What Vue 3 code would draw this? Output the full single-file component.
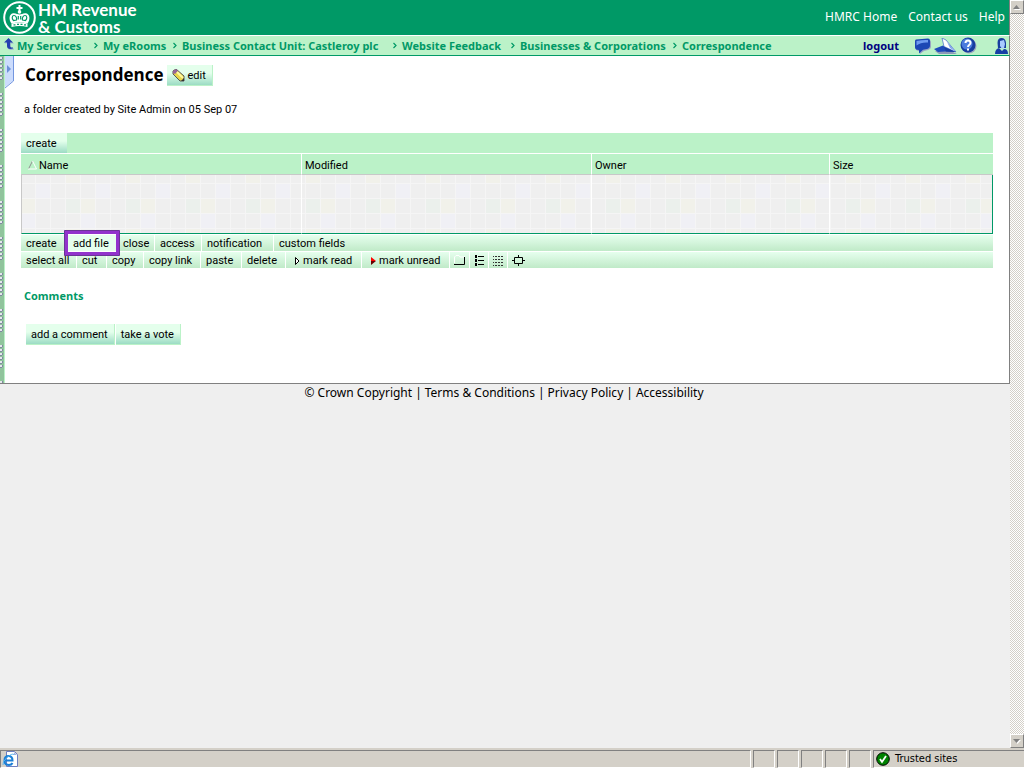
<script setup>
const crumbs = ['My Services', 'My eRooms', 'Business Contact Unit: Castleroy plc', 'Website Feedback', 'Businesses & Corporations', 'Correspondence']
const fileActions = ['create', 'add file', 'close', 'access', 'notification', 'custom fields']
const editActions = ['select all', 'cut', 'copy', 'copy link', 'paste', 'delete']
const footer = ['© Crown Copyright', 'Terms & Conditions', 'Privacy Policy', 'Accessibility']
const panes = 5
</script>

<template>
  <div class="window">
    <div class="viewport">
      <div class="page">
        <header class="banner">
          <a class="brand" href="#" aria-label="HM Revenue and Customs">
            <svg class="crest" width="34" height="34" viewBox="0 0 34 34" aria-hidden="true">
              <circle cx="17.500" cy="17.500" r="15.300" fill="none" stroke="#fff" stroke-width="2" />
              <path d="M16.500 5h2v2h2v2h-2v2h-2V9h-2V7h2z" fill="#fff" />
              <circle cx="17.500" cy="12" r="1.800" fill="#fff" />
              <path d="M9.500 23.500C6.500 20 7 14 11 13.300c3-.4 4.500 1.200 6.500 1.200s3.500-1.600 6.500-1.200c4 .7 4.500 6.700 1.500 10.200-5-1.500-11-1.500-16 0z" fill="#fff" />
              <path d="M11.500 20.500c-2-2-1.500-5 .5-5s3 2.500 2.500 4.500zM16.300 19.500v-3.500M18.700 19.500v-3.500M23.500 20.500c2-2 1.500-5-.5-5s-3 2.500-2.500 4.500z" fill="none" stroke="#096" stroke-width="1.200" />
              <path d="M9.500 23.500c5-1.500 11-1.500 16 0V27c-5-1.300-11-1.300-16 0z" fill="#fff" />
              <path d="M11.500 24.800h2M15 24.300h2M18.500 24.300h2M22 24.800h2" stroke="#096" stroke-width="1.300" />
            </svg>
            <span class="wordmark"><span>HM Revenue</span><span>&amp; Customs</span></span>
          </a>
          <nav class="top-links">
            <a href="#">HMRC Home</a><a href="#">Contact us</a><a href="#">Help</a>
          </nav>
        </header>

        <div class="trail">
          <a class="up" href="#" aria-label="Up">
            <svg width="10" height="12" viewBox="0 0 10 12"><path d="M5.500 1L10 5.500H7V9c0 1 1 1.500 3 1.500v1C6 12.500 4 11.500 4 9V5.500H1z" fill="#9db8c8" /><path d="M4.500 0L9 4.500H6V8c0 1 1 1.500 3 1.500v1C5 11.500 3 10.500 3 8V4.500H0z" fill="#2440b0" /></svg>
          </a>
          <nav class="crumbs">
            <span v-for="(c, i) in crumbs" :key="c" class="crumb"><a href="#">{{ c }}</a><svg v-if="i < crumbs.length - 1" width="4" height="7" viewBox="0 0 4 7"><path d="M.5 1L3 3.500.5 6" fill="none" stroke="#009966" stroke-width="1.200" /></svg></span>
          </nav>
          <a class="logout" href="#">logout</a>
          <div class="tools">
            <button aria-label="Chat"><svg width="17" height="16" viewBox="0 0 17 16"><path d="M3 3l12-1q2 0 2 2v5q0 2-3 3l-4 1-4 3V13Q2 13 2 11V5q0-2 1-2z" fill="#9aa4c4" /><path d="M2 1.500L14 .5q2 0 2 2v5Q16 10 13 11l-4 .8L5 15.500V12Q1 12 1 9.500V3.500q0-2 1-2z" fill="#1c47b4" /><path d="M2.500 3Q9 1.500 14 2v2.500Q7 4 2.500 7.500z" fill="#6e9bef" /></svg></button>
            <button aria-label="Send"><svg width="23" height="16" viewBox="0 0 23 16"><path d="M1 13l10-3 12 6H5z" fill="#8c98b9" /><path d="M0 11L9 7.500l13 6.500-11-.5-7 .5z" fill="#1e4cba" /><path d="M8 0l4 2 10 12L10 8.500z" fill="#fff" stroke="#4168c8" stroke-width=".7" /><path d="M13 4l9 10-6-4z" fill="#7fa4ee" /><path d="M10 9l12 5-10-.5z" fill="#1840a0" /></svg></button>
            <button aria-label="Help"><svg width="17" height="17" viewBox="0 0 17 17"><circle cx="9" cy="9" r="7.500" fill="#9ca7bd" /><circle cx="8" cy="8" r="7.500" fill="#173e9f" /><circle cx="7" cy="7" r="5.500" fill="#4c7cdd" /><path d="M5.500 6q0-2.500 2.500-2.500T10.500 6C10.500 8 8 7.500 8 10M8 11.500v2" fill="none" stroke="#fff" stroke-width="2" /></svg></button>
            <button class="person" aria-label="Members"><svg width="13" height="16" viewBox="0 0 13 16"><path d="M2.500 5Q2.500 0 6.500 0t4.500 5l0 5H3z" fill="#173e9f" /><path d="M5 3l4-1 1 4-1 4-2 1-2-3z" fill="#a9ccff" /><path d="M0 16q0-5 4-6l3 3 2-2q4 0 4 5z" fill="#173ea5" /></svg></button>
          </div>
        </div>

        <div class="room">
          <div class="rail"></div>
          <button class="drawer" aria-label="Open panel"><svg width="9" height="33" viewBox="0 0 9 33"><path d="M0 0H8V25L0 31z" fill="#ccdcfc" /><path d="M8.500 0V25L0 32" fill="none" stroke="#7396df" /><path d="M2 9l4 4-4 4z" fill="#6d91d8" /></svg></button>
          <main class="content">
            <div class="title-row">
              <h1>Correspondence</h1>
              <button class="action edit"><svg width="13" height="13" viewBox="0 0 13 13"><path d="M1 2l3-2 8 7v5H8L1 5z" fill="#e8d64a" stroke="#555" /><path d="M1 2l3-2 2 2-3 3-2-1z" fill="#96649a" /><path d="M5 3l6 6" stroke="#fff9a0" stroke-width="2" /><path d="M9 12l3-3v3z" fill="#333" /></svg>edit</button>
            </div>
            <p class="meta">a folder created by Site Admin on 05 Sep 07</p>

            <section class="listing">
              <div class="create-bar"><button>create</button></div>
              <table>
                <colgroup><col class="c-name"><col class="c-modified"><col class="c-owner"><col></colgroup>
                <thead>
                  <tr>
                    <th><svg class="sort" width="9" height="9" viewBox="0 0 9 9"><path d="M.5 8L4.500 0" stroke="#909090" /><path d="M4.500 0l4 8H0" fill="none" stroke="#fff" /></svg>Name</th>
                    <th>Modified</th><th>Owner</th><th>Size</th>
                  </tr>
                </thead>
                <tbody><tr><td></td><td></td><td></td><td></td></tr></tbody>
              </table>
              <div class="bar bar-file">
                <button v-for="a in fileActions" :key="a" :class="{ marked: a === 'add file' }">{{ a }}</button>
              </div>
              <div class="bar bar-edit">
                <button v-for="a in editActions" :key="a">{{ a }}</button>
                <button class="mark"><svg width="5" height="8" viewBox="0 0 5 8"><path d="M.5.5v7L4 4z" fill="#fff" stroke="#000" /></svg>mark read</button>
                <button class="mark"><svg width="5" height="8" viewBox="0 0 5 8"><path d="M0 0v4h5z" fill="#f00" /><path d="M0 8V4h5z" fill="#600" /></svg>mark unread</button>
                <button class="icon" aria-label="Large icons"><svg width="12" height="10" viewBox="0 0 12 10"><path d="M.5 8V2L2 .5h3L6 2h5" fill="none" stroke="#fff" /><path d="M0 9.500h10.500V2" fill="none" stroke="#000" /></svg></button>
                <button class="icon" aria-label="List"><svg width="10" height="11" viewBox="0 0 10 11"><path d="M1 0h2v3H1zM1 4h2v3H1zM1 8h2v3H1zM4 1h6v1H4zM4 5h6v1H4zM4 9h6v1H4z" /></svg></button>
                <button class="icon" aria-label="Details"><svg width="11" height="11" viewBox="0 0 11 11"><path d="M0 1.500h11M0 4.500h11M0 7.500h11M0 10.500h11" stroke="#333" stroke-dasharray="1 1 2 1 2 1 2 1" /></svg></button>
                <button class="icon" aria-label="Fit"><svg width="13" height="11" viewBox="0 0 13 11"><path d="M2.500 2.500h8v6h-8zM6.500 0v2M6.500 9v2M0 5.500h2M11 5.500h2" fill="none" stroke="#000" /></svg></button>
              </div>
            </section>

            <h2>Comments</h2>
            <div class="comment-actions">
              <button class="action">add a comment</button><button class="action">take a vote</button>
            </div>
          </main>
        </div>

        <footer class="legal">
          <template v-for="(f, i) in footer" :key="f"><span v-if="i">|</span><a href="#">{{ f }}</a></template>
        </footer>
      </div>

      <div class="scrollbar">
        <button aria-label="Scroll up"><svg width="8" height="5" viewBox="0 0 8 5"><path d="M1 5h7L4.500 1z" fill="#fff" /><path d="M0 4h7L3.500 0z" fill="#808080" /></svg></button>
        <button aria-label="Scroll down"><svg width="8" height="5" viewBox="0 0 8 5"><path d="M1 1h7L4.500 5z" fill="#fff" /><path d="M0 0h7L3.500 4z" fill="#808080" /></svg></button>
      </div>
    </div>

    <div class="status">
      <div class="pane pane-main">
        <svg width="16" height="16" viewBox="0 0 16 16"><path d="M4.500.5h8l3 3v12h-11z" fill="#fff" stroke="#6f7fc0" /><path d="M12 1v3h3" fill="#9fb0e0" /><path d="M3 9.500h7.500q0-4.500-4-4.500T2.500 9.500 7 14q2.500 0 3.500-2" fill="none" stroke="#1b7fd6" stroke-width="2" /><path d="M1 14Q0 11 5 6.500T12 3.500" fill="none" stroke="#55b4f0" /></svg>
      </div>
      <div v-for="n in panes" :key="n" class="pane"></div>
      <div class="pane pane-zone">
        <svg width="14" height="14" viewBox="0 0 14 14"><circle cx="7" cy="7" r="6.300" fill="#008200" stroke="#000" /><path d="M4 7l2 3 4-6" fill="none" stroke="#fff" stroke-width="1.800" /></svg>
        <span>Trusted sites</span>
      </div>
    </div>
  </div>
</template>

<style>
body { background: #efefef; }
</style>

<style scoped>
* { box-sizing: border-box; }
.window { display: flex; flex-direction: column; height: 100vh; overflow: hidden; font: 11px/16px "Noto Sans", sans-serif; color: #000; background: #efefef; }
a { color: inherit; text-decoration: none; }
button { font: inherit; color: inherit; border: 0; padding: 0; margin: 0; background: none; white-space: nowrap; text-align: left; }
svg { display: block; flex: none; }
.viewport { flex: 1; display: flex; min-height: 0; }
.page { flex: 1; min-width: 0; }

.banner { height: 36px; display: flex; justify-content: space-between; background: #009966; color: #fff; border-bottom: 1px solid #fff; border-right: 1px solid #808080; }
.brand { display: flex; gap: 2px; padding-left: 2px; }
.wordmark { font: 700 17px/17px Lato, sans-serif; padding-top: 1px; white-space: nowrap; }
.wordmark span { display: block; }
.top-links { display: flex; gap: 11px; padding: 9px 4px 0 0; font-size: 12px; }

.trail { height: 20px; display: flex; align-items: center; background: #bbf2c8; border-bottom: 1px solid #009966; border-right: 1px solid #808080; padding-left: 4px; color: #009966; font-weight: 700; }
.up { width: 13px; padding-bottom: 4px; }
.crumbs { flex: 1; display: grid; grid-template-columns: 86px 79px 220px 118px 162px auto; white-space: nowrap; }
.crumb { display: flex; align-items: center; justify-content: space-between; padding-right: 5px; }
.logout { color: #000080; margin-right: 15px; }
.tools { display: flex; align-items: center; gap: 3px; }
.person { margin: 0 1px 0 15px; }

.room { display: flex; min-height: 328px; background: #fff; border-bottom: 1px solid #808080; border-right: 1px solid #808080; }
.rail {
  width: 5px;
  border-right: 1px solid #bbf2c8;
  background:
    linear-gradient(transparent 24px, #90c49c 24px) 0 0 / 5px 36px,
    radial-gradient(circle at 1px 1px, #e4e8ec 0 1px, #8088a0 1px 2px, transparent 2px) 0 1px / 4px 4px,
    #90c49c;
}
.drawer { align-self: flex-start; }
.content { flex: 1; min-width: 0; padding: 8px 16px 38px 7px; font: 11px/16px Roboto, sans-serif; }
.title-row { display: flex; align-items: center; gap: 3px; padding-left: 4px; height: 22px; }
h1 { font: 700 17px/22px "Open Sans", sans-serif; margin: 0; }
.action { height: 21px; padding: 2px 6px 0 5px; background: linear-gradient(#e4ffec 40%, #9cdcc4); border-right: 1px solid #bbf2c8; border-bottom: 1px solid #bbf2c8; }
.edit { display: flex; align-items: center; gap: 3px; }
.meta { margin: 16px 0 15px; padding-left: 3px; }

.create-bar { height: 20px; background: #bbf2c8; }
.create-bar button { height: 20px; width: 46px; padding: 2px 0 0 5px; background: linear-gradient(#e4ffec 40%, #9cdcc4); }
table { width: 100%; table-layout: fixed; border-collapse: separate; border-spacing: 0; margin-top: 1px; }
.c-name { width: 281px; }
.c-modified { width: 290px; }
.c-owner { width: 238px; }
th { height: 21px; padding: 4px 3px 0; text-align: left; font-weight: 400; line-height: 16px; background: #bbf2c8; border-bottom: 1px solid #c8c8c8; border-right: 1px solid #fff; }
th:last-child { border-right: 0; }
th:first-child { padding-left: 7px; }
.sort { display: inline-block; margin-right: 2px; vertical-align: -1px; }
tbody {
  background: #efefef url("data:image/svg+xml,%3Csvg xmlns='http://www.w3.org/2000/svg' width='60' height='60'%3E%3Cpath fill='%23f1f1ea' d='M45 0h14v8H45zM45 54h14v6H45zM0 24h14v14H0z'/%3E%3Cpath fill='%23ebf0ec' d='M45 24h14v14H45z'/%3E%3Cpath fill='%23f0f0f5' d='M15 9h14v14H15zM0 39h14v14H0z'/%3E%3Cpath fill='%23f5f5f5' d='M14 0h1v60h-1zM29 0h1v60h-1zM44 0h1v60h-1zM59 0h1v60h-1zM0 8h60v1H0zM0 23h60v1H0zM0 38h60v1H0zM0 53h60v1H0z'/%3E%3C/svg%3E");
}
td { height: 59px; padding: 0; border-right: 1px solid #fff; border-bottom: 1px solid #009966; }
td:first-child { border-left: 1px solid #c8c8c8; }
td:last-child { border-right: 1px solid #009966; }

.bar { display: grid; height: 16px; margin-top: 1px; background: linear-gradient(#e6ffee, #c0eac8); }
.bar-file { grid-template-columns: 46px 51px 37px 47px 72px auto; }
.bar-edit { grid-template-columns: 56px 30px 37px 57px 41px 44px 76px 88px 20px 19px 19px auto; }
.bar button { height: 16px; padding: 2px 0 0 5px; line-height: 16px; border-right: 1px solid #fff; display: flex; align-items: center; }
.bar button:last-child { border-right: 0; }
.bar .mark { gap: 3px; padding-left: 9px; }
.bar .icon { padding: 0 0 0 4px; }
.bar .marked { position: relative; padding-left: 6px; background: #e6ffee; }
.marked::after { content: ""; position: absolute; inset: -5px -3px; border: 4px solid #9233cc; outline: 1px solid #6a3596; outline-offset: -1px; border-radius: 1px; }

h2 { margin: 20px 0 20px; padding-left: 3px; font: 700 11px/16px "Open Sans", sans-serif; color: #009966; }
.comment-actions { display: flex; gap: 1px; padding-left: 5px; }
.legal { display: flex; justify-content: center; gap: 3px; padding: 1px 2px 0 0; font-size: 12px; }

.scrollbar { width: 14px; display: flex; flex-direction: column; justify-content: space-between; background: repeating-conic-gradient(#fff 0 25%, #d4d0c8 0 50%) 0 0 / 2px 2px; }
.scrollbar button { height: 14px; display: flex; align-items: center; justify-content: center; background: #d4d0c8; border: 1px solid; border-color: #fff #808080 #808080 #fff; }

.status { height: 20px; display: flex; gap: 2px; background: #d4d0c8; padding-top: 2px; font: 11px/16px "DejaVu Sans Condensed", "Noto Sans", sans-serif; }
.pane { width: 22px; border: 1px solid; border-color: #808080 #fff #fff #808080; }
.pane-main { flex: 1; padding-left: 1px; }
.pane-zone { width: 151px; display: flex; align-items: center; gap: 5px; padding-left: 2px; border-right: 0; }
</style>
